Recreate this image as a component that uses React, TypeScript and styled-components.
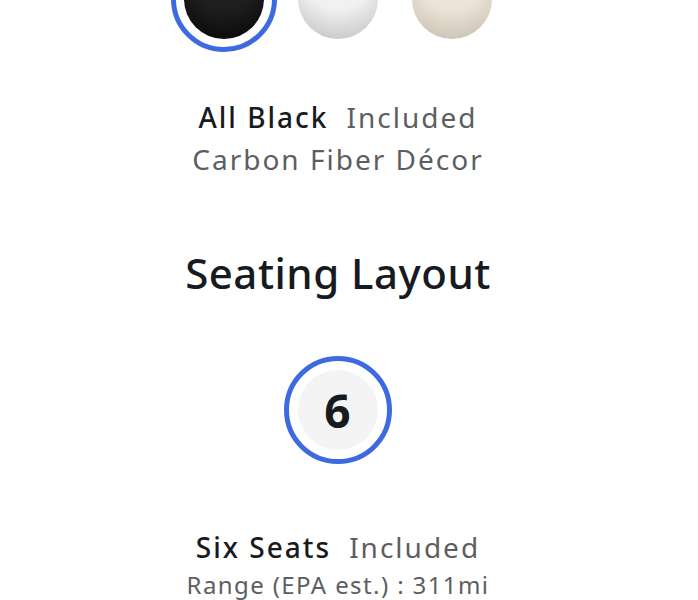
import * as React from 'react';
import styled, { createGlobalStyle } from 'styled-components';

const GlobalStyle = createGlobalStyle`
	html, body {
		margin: 0;
		padding: 0;
		background: #fff;
		overflow: hidden;
	}
	body {
		font-family: 'Noto Sans', 'DejaVu Sans', sans-serif;
		color: #171a20;
	}
`;

const Page = styled.div`
	width: 676px;
	display: flex;
	flex-direction: column;
	align-items: center;
`;

const SwatchRow = styled.div`
	display: flex;
	align-items: center;
	gap: 20px;
	margin-top: -54px;
`;

const SwatchRing = styled.div<{ active?: boolean }>`
	width: 106px;
	height: 106px;
	box-sizing: border-box;
	border-radius: 50%;
	border: 5px solid ${p => (p.active ? '#3e6ae1' : 'transparent')};
	display: flex;
	align-items: center;
	justify-content: center;
	margin: 0 -6px;
`;

const Swatch = styled.div<{ top: string; bottom: string }>`
	width: 80px;
	height: 80px;
	border-radius: 50%;
	background: radial-gradient(
		circle at 50% 20%,
		${p => p.top} 0%,
		${p => p.top} 45%,
		${p => p.bottom} 100%
	);
`;

const Option = styled.div<{ gap: number }>`
	margin-top: ${p => p.gap}px;
	text-align: center;
	font-size: 28px;
	line-height: 42px;
	letter-spacing: 2px;
`;

const Name = styled.span`
	font-weight: 500;
	color: #171a20;
	margin-right: 18px;
`;

const Price = styled.span`
	color: #5c5e62;
`;

const Detail = styled.div<{ small?: boolean }>`
	color: #5c5e62;
	font-size: ${p => (p.small ? 24 : 28)}px;
	line-height: ${p => (p.small ? 33 : 42)}px;
	letter-spacing: ${p => (p.small ? 1.4 : 2)}px;
`;

const Heading = styled.h2`
	margin: 65px 0 0;
	font-size: 42px;
	line-height: 56px;
	font-weight: 500;
	letter-spacing: 0.5px;
	color: #171a20;
`;

const SeatRing = styled.div`
	margin-top: 55px;
	width: 108px;
	height: 108px;
	box-sizing: border-box;
	border-radius: 50%;
	border: 5px solid #3e6ae1;
	display: flex;
	align-items: center;
	justify-content: center;
`;

const SeatCount = styled.div`
	width: 80px;
	height: 80px;
	border-radius: 50%;
	background: #f4f4f4;
	display: flex;
	align-items: center;
	justify-content: center;
	font-size: 46px;
	font-weight: 700;
	letter-spacing: 1px;
	color: #171a20;
`;

const paints = [
	{ top: '#1e1e1e', bottom: '#050505', active: true },
	{ top: '#f1f1f1', bottom: '#bdbdbd' },
	{ top: '#ece4d9', bottom: '#c4b9ab' }
];

export default function App() {
	return (
		<Page>
			<GlobalStyle />
			<SwatchRow>
				{paints.map((p, i) => (
					<SwatchRing key={i} active={p.active}>
						<Swatch top={p.top} bottom={p.bottom} />
					</SwatchRing>
				))}
			</SwatchRow>
			<Option gap={44}>
				<div>
					<Name>All Black</Name>
					<Price>Included</Price>
				</div>
				<Detail>Carbon Fiber Décor</Detail>
			</Option>
			<Heading>Seating Layout</Heading>
			<SeatRing>
				<SeatCount>6</SeatCount>
			</SeatRing>
			<Option gap={62}>
				<div>
					<Name>Six Seats</Name>
					<Price>Included</Price>
				</div>
				<Detail small>Range (EPA est.) : 311mi</Detail>
			</Option>
		</Page>
	);
}
